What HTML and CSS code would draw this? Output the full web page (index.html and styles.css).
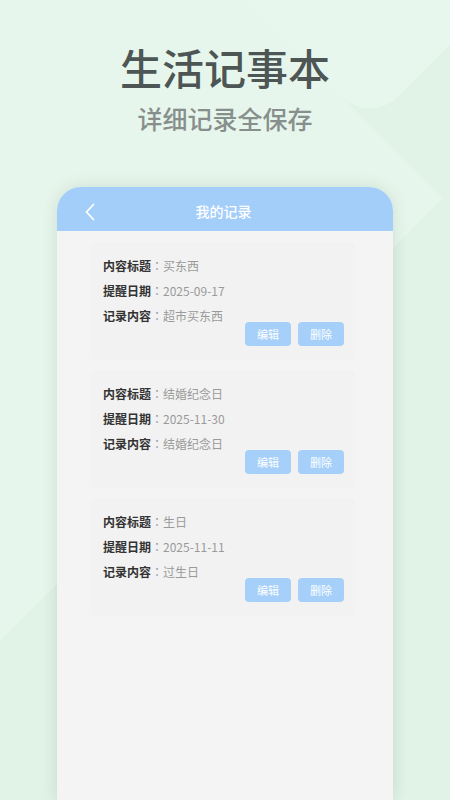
FILE: index.html
```html
<!DOCTYPE html>
<html lang="zh-CN">
<head>
<meta charset="utf-8">
<title>生活记事本</title>
<link rel="stylesheet" href="styles.css">
</head>
<body>
<div class="page">
  <div class="deco deco-left"></div>
  <div class="deco deco-top"></div>
  <div class="hero">
    <h1 class="title">生活记事本</h1>
    <p class="subtitle">详细记录全保存</p>
  </div>
  <div class="phone">
    <div class="bar">
      <svg class="back" width="12" height="18" viewBox="0 0 12 18"><path d="M9.5 1.5 L2.5 9 L9.5 16.5" fill="none" stroke="#ffffff" stroke-width="1.8" stroke-linecap="round" stroke-linejoin="round"/></svg>
      <span class="bar-title">我的记录</span>
    </div>
    <div class="list">
      <div class="record">
        <div class="row"><span class="label">内容标题</span><span class="colon">：</span><span class="value">买东西</span></div>
        <div class="row"><span class="label">提醒日期</span><span class="colon">：</span><span class="value">2025-09-17</span></div>
        <div class="row"><span class="label">记录内容</span><span class="colon">：</span><span class="value">超市买东西</span></div>
        <div class="actions"><span class="btn">编辑</span><span class="btn">删除</span></div>
      </div>
      <div class="record">
        <div class="row"><span class="label">内容标题</span><span class="colon">：</span><span class="value">结婚纪念日</span></div>
        <div class="row"><span class="label">提醒日期</span><span class="colon">：</span><span class="value">2025-11-30</span></div>
        <div class="row"><span class="label">记录内容</span><span class="colon">：</span><span class="value">结婚纪念日</span></div>
        <div class="actions"><span class="btn">编辑</span><span class="btn">删除</span></div>
      </div>
      <div class="record">
        <div class="row"><span class="label">内容标题</span><span class="colon">：</span><span class="value">生日</span></div>
        <div class="row"><span class="label">提醒日期</span><span class="colon">：</span><span class="value">2025-11-11</span></div>
        <div class="row"><span class="label">记录内容</span><span class="colon">：</span><span class="value">过生日</span></div>
        <div class="actions"><span class="btn">编辑</span><span class="btn">删除</span></div>
      </div>
    </div>
  </div>
</div>
</body>
</html>
```
FILE: styles.css
```css
html, body {
  margin: 0;
  padding: 0;
}
body {
  font-family: "Noto Sans CJK SC", "Noto Sans", sans-serif;
}
.page {
  position: relative;
  width: 450px;
  height: 800px;
  overflow: hidden;
  background: #e1f2e6;
  display: flex;
  flex-direction: column;
}
.deco {
  position: absolute;
  transform: rotate(45deg);
  background: #e7f6ec;
}
.deco-left {
  left: -752px;
  top: -297px;
  width: 990px;
  height: 990px;
}
.deco-top {
  left: 170px;
  top: -358px;
  width: 400px;
  height: 400px;
  border-radius: 40px;
  background: #e8f7ee;
}
.hero {
  position: relative;
  text-align: center;
  padding-top: 43px;
}
.title {
  margin: 0;
  font-size: 42px;
  line-height: 48px;
  font-weight: 500;
  color: #4d5654;
  letter-spacing: 0;
}
.subtitle {
  margin: 12px 0 0;
  font-size: 25px;
  line-height: 30px;
  font-weight: 500;
  color: #878f8c;
}
.phone {
  position: relative;
  margin: 54px 0 0 57px;
  width: 336px;
  flex: 1;
  border-radius: 24px 24px 0 0;
  background: #f4f4f4;
  box-shadow: 0 0 16px rgba(40, 80, 60, 0.14);
  overflow: hidden;
  display: flex;
  flex-direction: column;
}
.bar {
  height: 44px;
  flex: none;
  background: #a4cefa;
  display: flex;
  align-items: center;
  justify-content: center;
  position: relative;
}
.back {
  position: absolute;
  left: 27px;
  top: 16px;
}
.bar-title {
  color: #ffffff;
  font-size: 14px;
  font-weight: 500;
  margin-top: 3px;
  margin-left: -3px;
}
.list {
  padding: 12px 0 0 35px;
  display: flex;
  flex-direction: column;
  gap: 12px;
}
.record {
  width: 262px;
  box-sizing: border-box;
  padding: 10px 10px 13px 11px;
  background: #f2f2f2;
  border-radius: 4px;
  box-shadow: 0 0 3px rgba(0, 0, 0, 0.03);
}
.row {
  height: 25px;
  display: flex;
  align-items: center;
  font-size: 12px;
}
.label {
  font-weight: 700;
  color: #333333;
}
.colon {
  font-family: "Noto Sans CJK TC", "Noto Sans CJK SC", sans-serif;
  color: #999999;
}
.value {
  color: #9a9a9a;
}
.actions {
  display: flex;
  justify-content: flex-end;
  gap: 7px;
  margin-top: -6px;
}
.btn {
  width: 46px;
  height: 24px;
  border-radius: 4px;
  background: #a6d0fa;
  color: #ffffff;
  font-size: 11px;
  display: flex;
  align-items: center;
  justify-content: center;
}
```
